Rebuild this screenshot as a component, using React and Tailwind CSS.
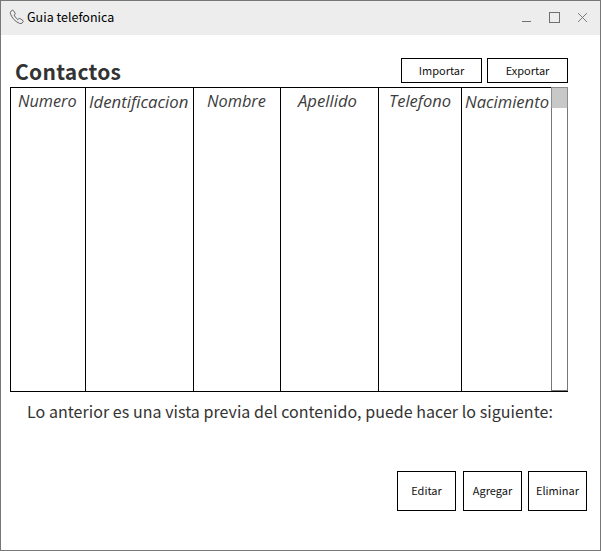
const columns = [
  { label: 'Numero', cell: 'w-[75px]', text: 'pl-[7px]', word: 'scale-x-[0.955]' },
  { label: 'Identificacion', cell: 'w-[108px]', text: 'pl-[3px] pt-px', word: 'scale-x-[0.985]' },
  { label: 'Nombre', cell: 'w-[87px]', text: 'pl-[13px]', word: 'scale-x-[0.96]' },
  { label: 'Apellido', cell: 'w-[98px]', text: 'pl-[17px]', word: 'scale-x-[0.98]' },
  { label: 'Telefono', cell: 'w-[83px]', text: 'pl-[10px]', word: 'scale-x-[0.97]' },
  { label: 'Nacimiento', cell: 'w-[90px]', text: 'pl-[3px] pt-px', word: 'scale-x-[0.975]' },
];

function Button({ children, className }) {
  return (
    <button className={`flex items-center justify-center border border-black bg-white pb-px text-[11px] leading-none text-[#111] ${className}`}>
      {children}
    </button>
  );
}

function TitleBar() {
  return (
    <header className="flex h-[34px] shrink-0 items-start bg-[#ededed]">
      <svg className="mt-[8px] ml-[8px] h-4 w-4" viewBox="0 0 16 16" fill="none" stroke="#444" strokeWidth="0.8" strokeLinejoin="round">
        <path d="M2 2.2 3.4 1.2Q4 .9 4.4 1.5L6.2 4.3Q6.5 4.9 6 5.4L5.1 6.1Q6.2 8.6 8.8 10.5L10 9.6Q10.6 9.2 11.2 9.6L14 11.6Q14.7 12.1 14.2 12.7L13 14.1Q12.2 15 10.5 14.4 3.7 11.3 1.4 4.6 1 3 2 2.2Z" />
      </svg>
      <h1 className="mt-[6px] ml-[2px] text-[12.5px] leading-5 text-black">Guia telefonica</h1>
      <div className="mr-[13px] ml-auto flex">
        <div className="mt-[20px] mr-[18px] h-px w-[9px] bg-[#707070]" />
        <div className="mt-[11px] mr-[18px] h-[11px] w-[11px] border border-[#707070]" />
        <svg className="mt-[12px] h-[9px] w-[9px]" viewBox="0 0 9 9" stroke="#707070" strokeWidth="0.9">
          <path d="M0 0 9 9M9 0 0 9" />
        </svg>
      </div>
    </header>
  );
}

export default function App() {
  return (
    <div className="h-[551px] w-[602px] overflow-hidden bg-white font-['Noto_Sans_CJK_SC',sans-serif] text-[#333]">
      <main className="flex h-[551px] w-[601px] flex-col border border-[#777]">
        <TitleBar />
        <div className="mt-[21px] ml-[9px] flex h-[31px] w-[558px] shrink-0 items-start">
          <h2 className="ml-[5px] text-[21px] leading-[30px] font-bold tracking-[0.25px]">Contactos</h2>
          <Button className="mt-[2px] ml-auto h-[25px] w-[81px]">Importar</Button>
          <Button className="mt-[2px] ml-[5px] h-[25px] w-[81px]">Exportar</Button>
        </div>
        <div className="ml-[9px] flex h-[305px] w-[558px] shrink-0">
          <div className="flex w-[541px] border-y border-black">
            {columns.map((c) => (
              <div key={c.label} className={`shrink-0 border-l border-black font-['Open_Sans',sans-serif] text-[17px] leading-[26px] whitespace-nowrap text-[#3c3c3c] italic ${c.cell}`}>
                <div className={c.text}>
                  <span className={`inline-block origin-left ${c.word}`}>{c.label}</span>
                </div>
              </div>
            ))}
          </div>
          <div className="w-[17px] border-b border-black">
            <div className="h-full border border-[#777]">
              <div className="-mx-px -mt-px h-[21px] border-x border-t border-[#8c8c8c] bg-[#c8c8c8]" />
            </div>
          </div>
        </div>
        <p className="mt-[6px] ml-[26px] text-[16px] leading-[26px] tracking-[0.045px] whitespace-nowrap">
          Lo anterior es una vista previa del contenido, puede hacer lo siguiente:
        </p>
        <div className="mt-[47px] ml-[396px] flex">
          <Button className="h-[40px] w-[59px]">Editar</Button>
          <Button className="ml-[7px] h-[40px] w-[59px]">Agregar</Button>
          <Button className="ml-[6px] h-[40px] w-[59px]">Eliminar</Button>
        </div>
      </main>
    </div>
  );
}
